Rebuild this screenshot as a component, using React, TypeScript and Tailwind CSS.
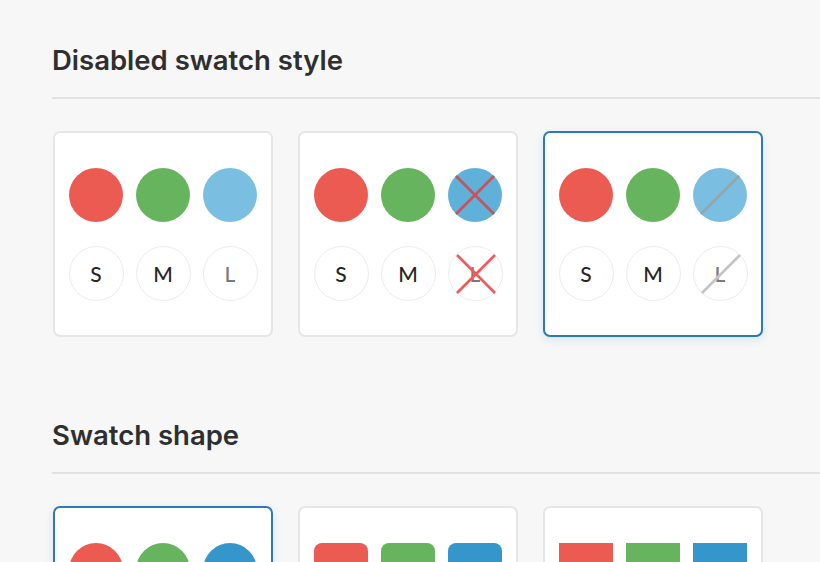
import React from "react";

type Shape = "circle" | "rounded" | "square";
type Mark = "none" | "cross" | "strike";

const shapeClass: Record<Shape, string> = {
  circle: "rounded-full",
  rounded: "rounded-[8px]",
  square: "rounded-none",
};

function Overlay({ mark, tone }: { mark: Mark; tone: "color" | "size" }) {
  if (mark === "none") return null;
  if (mark === "cross") {
    const stroke = tone === "color" ? "#c9515a" : "#f25a5a";
    return (
      <svg className="absolute inset-0 pointer-events-none" viewBox="0 0 54 54" width="54" height="54">
        <line x1="8" y1="8" x2="46" y2="46" stroke={stroke} strokeWidth="2.6" />
        <line x1="46" y1="8" x2="8" y2="46" stroke={stroke} strokeWidth="2.6" />
      </svg>
    );
  }
  const stroke = tone === "color" ? "#9aa3a8" : "#c4c4c4";
  return (
    <svg className="absolute inset-0 pointer-events-none" viewBox="0 0 54 54" width="54" height="54">
      <line x1="8" y1="46" x2="46" y2="8" stroke={stroke} strokeWidth="2.6" />
    </svg>
  );
}

function ColorSwatch({ color, shape, mark = "none" }: { color: string; shape: Shape; mark?: Mark }) {
  return (
    <div className={`relative w-[54px] h-[54px] ${shapeClass[shape]}`} style={{ backgroundColor: color }}>
      <Overlay mark={mark} tone="color" />
    </div>
  );
}

function SizeSwatch({ label, shape, disabled, mark = "none" }: { label: string; shape: Shape; disabled?: boolean; mark?: Mark }) {
  return (
    <div
      className={`relative w-[55px] h-[55px] ${shapeClass[shape]} bg-white border border-[#ececec] flex items-center justify-center font-['Lato',sans-serif] text-[21px] font-medium ${
        disabled ? "text-[#7a7a7a]" : "text-[#262626]"
      }`}
    >
      <span className="mt-[2px]">{label}</span>
      <Overlay mark={mark} tone="size" />
    </div>
  );
}

type CardProps = {
  selected?: boolean;
  shape: Shape;
  blue: string;
  mark?: Mark;
};

function Card({ selected, shape, blue, mark = "none" }: CardProps) {
  return (
    <div
      className={`w-[220px] h-[206px] shrink-0 bg-white rounded-[7px] border-2 flex flex-col items-center justify-center gap-[24px] ${
        selected ? "border-[#2a7ab8] shadow-[0_3px_10px_rgba(42,122,184,0.14)]" : "border-[#e6e6e6]"
      }`}
    >
      <div className="flex gap-[13px]">
        <ColorSwatch color="#eb5b52" shape={shape} />
        <ColorSwatch color="#66b45d" shape={shape} />
        <ColorSwatch color={blue} shape={shape} mark={mark} />
      </div>
      <div className="flex gap-[12px]">
        <SizeSwatch label="S" shape={shape} />
        <SizeSwatch label="M" shape={shape} />
        <SizeSwatch label="L" shape={shape} disabled mark={mark} />
      </div>
    </div>
  );
}

function Section({ title, children, first }: { title: string; children: React.ReactNode; first?: boolean }) {
  return (
    <section className={first ? "" : "mt-[82px]"}>
      <h2 className="font-['Inter',sans-serif] text-[27.5px] leading-[32px] font-semibold text-[#2f2f2f]">
        {title}
      </h2>
      <div className="mt-[21px] h-[2px] bg-[#e2e2e2]" />
      <div className="mt-[32px] flex gap-[25px] pl-[1px]">{children}</div>
    </section>
  );
}

export default function App() {
  return (
    <div className="min-h-screen bg-[#f7f7f7] pl-[52px] pt-[44px] pb-[60px] overflow-hidden">
      <Section title="Disabled swatch style" first>
        <Card shape="circle" blue="#7abfe1" />
        <Card shape="circle" blue="#5fb1da" mark="cross" />
        <Card shape="circle" blue="#7abfe1" mark="strike" selected />
      </Section>
      <Section title="Swatch shape">
        <Card shape="circle" blue="#3596cc" selected />
        <Card shape="rounded" blue="#3596cc" />
        <Card shape="square" blue="#3596cc" />
      </Section>
    </div>
  );
}
